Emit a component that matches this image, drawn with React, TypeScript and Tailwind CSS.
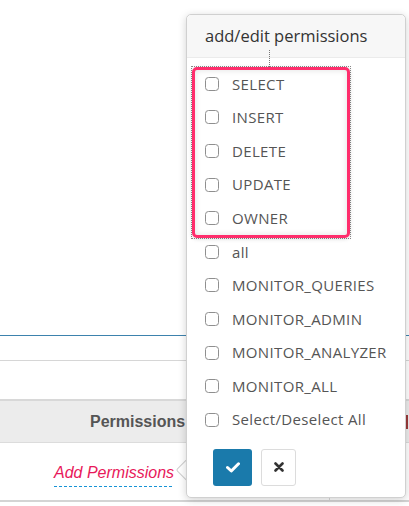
import React from "react";

const items = [
  "SELECT",
  "INSERT",
  "DELETE",
  "UPDATE",
  "OWNER",
  "all",
  "MONITOR_QUERIES",
  "MONITOR_ADMIN",
  "MONITOR_ANALYZER",
  "MONITOR_ALL",
  "Select/Deselect All",
];

export default function App() {
  return (
    <div className="relative w-[409px] h-[506px] bg-white overflow-hidden">
      {/* background page */}
      <div className="h-[335px]" />
      <div className="h-[26px] border-t border-b border-[#d6d6d6] border-t-[#3d82ad]" />
      <div className="h-[38px]" />
      <div
        className="flex h-[44px] items-center border-t-2 border-b border-[#d8d8d8] border-b-[#dcdcdc] bg-[#ececec] text-[16px] font-bold text-[#555]"
        style={{ fontFamily: '"Liberation Sans", Arial, sans-serif' }}
      >
        <div className="w-[406px] pl-[90px]">Permissions</div>
        <div className="w-[2px] h-[14px] bg-[#9a3a3a]" />
      </div>
      <div className="flex h-[59px] border-b-2 border-[#d4d4d4]">
        <div className="w-[330px] border-r border-[#dadada] pl-[54px] pt-[17px]">
          <div className="inline-flex flex-col gap-[4px]">
            <span
              className="italic text-[16px] text-[#e8185a] leading-[18px]"
              style={{ fontFamily: '"Liberation Sans", Arial, sans-serif' }}
            >
              Add Permissions
            </span>
            <div className="h-[1px] w-full bg-[repeating-linear-gradient(90deg,#1793d6_0_3px,transparent_3px_5px)]" />
          </div>
        </div>
      </div>

      {/* popover arrow */}
      <div className="absolute left-[179px] top-[462px] w-[16px] h-[16px] rotate-45 rounded-[2px] bg-white border border-[#cfcfcf]" />

      {/* popover */}
      <div
        className="absolute left-[186px] top-[14px] w-[220px] h-[484px] rounded-[5px] border border-[#d0d0d0] bg-white shadow-[0_2px_8px_rgba(0,0,0,0.18)] flex flex-col"
        style={{ fontFamily: '"Open Sans", "Noto Sans", sans-serif' }}
      >
        <div className="h-[43px] shrink-0 rounded-t-[5px] bg-[#f7f7f7] border-b border-[#ebebeb] pl-[18px] flex items-center text-[16.5px] text-[#333]">
          add/edit permissions
        </div>
        <div className="flex flex-col pt-[9px]">
          {items.map((t) => (
            <div key={t} className="flex h-[33.6px] items-center pl-[18px] gap-[13px]">
              <div className="w-[14px] h-[14px] rounded-[3.5px] border border-[#8f8f8f] bg-white shrink-0" />
              <span className="text-[15px] text-[#555] tracking-[0.35px]">{t}</span>
            </div>
          ))}
        </div>
        <div className="flex gap-[9px] pl-[26px] pt-[12px]">
          <button className="w-[39px] h-[37px] rounded-[3px] bg-[#1a7aab] flex items-center justify-center">
            <svg width="14" height="11" viewBox="0 0 14 11">
              <path d="M1.5 5.5 L5.3 9 L12.5 1.8" stroke="white" strokeWidth="3" fill="none" strokeLinecap="round" strokeLinejoin="round" />
            </svg>
          </button>
          <button className="w-[35px] h-[37px] rounded-[3px] bg-white border border-[#dcdcdc] flex items-center justify-center">
            <svg width="10" height="10" viewBox="0 0 10 10">
              <path d="M1.5 1.5 L8.5 8.5 M8.5 1.5 L1.5 8.5" stroke="#333" strokeWidth="2.6" strokeLinecap="round" />
            </svg>
          </button>
        </div>

        {/* dotted focus line */}
        <div className="absolute left-[82px] top-[35px] h-[17px] border-l border-dotted border-[#777]" />
        {/* focus outline */}
        <div className="absolute left-[4px] top-[51px] w-[160px] h-[173px] border border-dotted border-[#888]" />
        {/* pink annotation */}
        <div className="absolute left-[5px] top-[52px] w-[158px] h-[171px] rounded-[5px] border-[3px] border-[#ff2d6c] shadow-[inset_0_0_6px_rgba(0,0,0,0.12),0_1px_4px_rgba(0,0,0,0.15)]" />
      </div>
    </div>
  );
}
